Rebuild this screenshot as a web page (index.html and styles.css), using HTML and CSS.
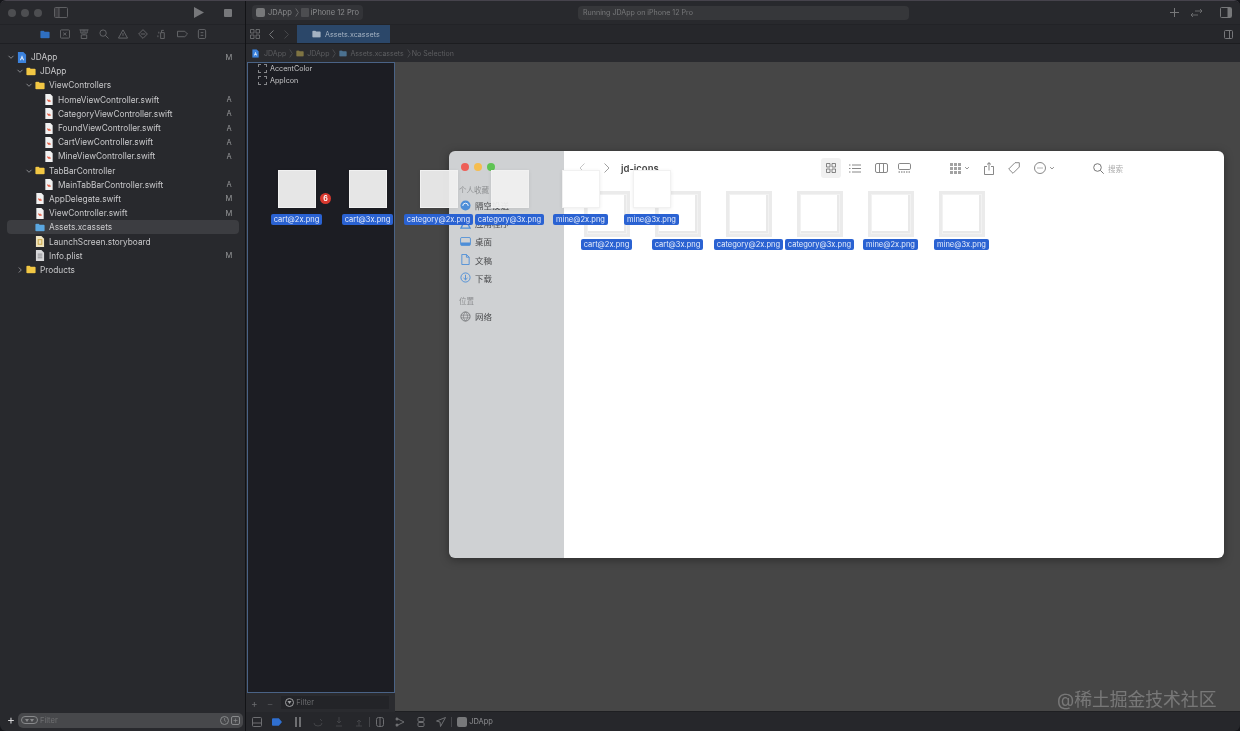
FILE: index.html
```html
<!DOCTYPE html>
<html lang="en">
<head>
    <meta charset="UTF-8">
    <meta name="viewport" content="width=device-width, initial-scale=1.0">
    <title>JDApp - Assets.xcassets</title>
    <link rel="stylesheet" href="styles.css">
</head>
<body>

    <!-- Shared icons -->
    <svg class="icon-defs" width="0" height="0">
        <symbol id="i-swift" viewBox="0 0 10 12">
            <path d="M1 0h5.500L9 2.500V12H1z" fill="#f1f1f1"/>
            <path d="M3.200 5.500c1 .8 1.900 1.500 2.500 1.800-.5-.7-.8-1.300-1-1.800.8.800 1.500 1.300 2 1.500.2.700 0 1.700 0 1.700-.6-.4-1.100-.2-1.700-.2-.9 0-1.500-.8-1.800-1.400z" fill="#e4573d"/>
        </symbol>
        <symbol id="i-folder" viewBox="0 0 12 10">
            <path d="M.5 1.500C.5.900.9.500 1.500.500h3l1 1.200h5c.6 0 1 .4 1 1v5.800c0 .6-.4 1-1 1h-9c-.6 0-1-.4-1-1z" fill="currentColor"/>
        </symbol>
        <symbol id="i-project" viewBox="0 0 10 12">
            <path d="M.5 0h6L9.500 3v9H.5z" fill="#3c82dc"/>
            <path d="M5 3.500 2.700 9h1l.4-1h1.800l.4 1h1zM4.500 7 5 5.600 5.500 7z" fill="#e6f0fb"/>
        </symbol>
        <symbol id="i-story" viewBox="0 0 10 12">
            <path d="M.5 0h6L9.500 3v9H.5z" fill="#efe4c0"/>
            <rect x="3" y="4" width="4" height="5" fill="none" stroke="#c9a23f"/>
        </symbol>
        <symbol id="i-plist" viewBox="0 0 10 12">
            <path d="M.5 0h6L9.500 3v9H.5z" fill="#d8d8da"/>
            <path d="M2.500 4.500h5M2.500 6.500h5M2.500 8.500h5" stroke="#77777b" stroke-width=".8"/>
        </symbol>
        <symbol id="i-chevron" viewBox="0 0 8 8">
            <path d="M1.500 2.800 4 5.300l2.500-2.500" fill="none" stroke="currentColor" stroke-width="1"/>
        </symbol>
        <symbol id="i-crumb" viewBox="0 0 4 10">
            <path d="M.5.500 3.500 5 .5 9.500" fill="none" stroke="currentColor" stroke-width=".7"/>
        </symbol>
    </svg>

    <div class="xcode">

        <!-- Navigator -->
        <aside class="navigator">
            <div class="nav-toolbar">
                <div class="lights">
                    <span class="light"></span>
                    <span class="light"></span>
                    <span class="light"></span>
                </div>
                <svg class="sidebar-toggle" viewBox="0 0 14 11" width="14" height="11"><path d="M.5 1.500a1 1 0 0 1 1-1h11a1 1 0 0 1 1 1v8a1 1 0 0 1-1 1h-11a1 1 0 0 1-1-1zM5 .5v10" fill="none" stroke="currentColor"/><path d="M1 1h4v9H1z" fill="currentColor" opacity=".35"/></svg>
                <svg class="run-btn" viewBox="0 0 10 11" width="10" height="11"><path d="M0 0l10 5.500L0 11z" fill="currentColor"/></svg>
                <span class="stop-btn"></span>
            </div>

            <div class="nav-tabs">
                <svg viewBox="0 0 12 10" width="10" height="9" class="is-active"><use href="#i-folder"/></svg>
                <svg viewBox="0 0 11 11" width="10" height="10"><rect x=".5" y="1" width="10" height="9" rx="1" fill="none" stroke="currentColor"/><path d="M3.500 4l3.500 3M7 4 3.500 7" stroke="currentColor"/></svg>
                <svg viewBox="0 0 11 11" width="10" height="10"><path d="M.5 1h10M2 1v3.500h2.500V1M6.500 1v3.500H9V1M5.500 4.500v2M2.500 6.500h6v4h-6z" fill="none" stroke="currentColor"/></svg>
                <svg viewBox="0 0 11 11" width="10" height="10"><circle cx="4.500" cy="4.500" r="3.500" fill="none" stroke="currentColor"/><path d="M7 7l3.500 3.500" stroke="currentColor"/></svg>
                <svg viewBox="0 0 11 11" width="10" height="10"><path d="M5.500 1 10.500 10H.5zM5.500 4.500v3" fill="none" stroke="currentColor"/></svg>
                <svg viewBox="0 0 11 11" width="10" height="10"><path d="M5.500.7 10.300 5.500 5.500 10.300.7 5.500zM3 5.500h5" fill="none" stroke="currentColor"/></svg>
                <svg viewBox="0 0 11 11" width="10" height="10"><path d="M4 4h4v6.500H4zM5 4V1.500h2.500M2 3v2M1 7v2" fill="none" stroke="currentColor"/></svg>
                <svg viewBox="0 0 12 11" width="11" height="10"><path d="M.5 2.500h8l3 3-3 3h-8z" fill="none" stroke="currentColor"/></svg>
                <svg viewBox="0 0 11 11" width="10" height="10"><rect x="1.500" y=".5" width="8" height="10" rx="1.500" fill="none" stroke="currentColor"/><path d="M4 4h3M4 7h3" stroke="currentColor"/></svg>
            </div>

            <div class="tree">
                <div class="tree-row lvl-0 strong"><svg class="chev" width="8" height="8"><use href="#i-chevron"/></svg><svg class="file-icon" viewBox="0 0 10 12"><use href="#i-project"/></svg><span>JDApp</span><em>M</em></div>
                <div class="tree-row lvl-1"><svg class="chev" width="8" height="8"><use href="#i-chevron"/></svg><svg class="file-icon yellow" viewBox="0 0 12 10"><use href="#i-folder"/></svg><span>JDApp</span></div>
                <div class="tree-row lvl-2"><svg class="chev" width="8" height="8"><use href="#i-chevron"/></svg><svg class="file-icon yellow" viewBox="0 0 12 10"><use href="#i-folder"/></svg><span>ViewControllers</span></div>
                <div class="tree-row lvl-3"><i class="chev"></i><svg class="file-icon" viewBox="0 0 10 12"><use href="#i-swift"/></svg><span>HomeViewController.swift</span><em>A</em></div>
                <div class="tree-row lvl-3"><i class="chev"></i><svg class="file-icon" viewBox="0 0 10 12"><use href="#i-swift"/></svg><span>CategoryViewController.swift</span><em>A</em></div>
                <div class="tree-row lvl-3"><i class="chev"></i><svg class="file-icon" viewBox="0 0 10 12"><use href="#i-swift"/></svg><span>FoundViewController.swift</span><em>A</em></div>
                <div class="tree-row lvl-3"><i class="chev"></i><svg class="file-icon" viewBox="0 0 10 12"><use href="#i-swift"/></svg><span>CartViewController.swift</span><em>A</em></div>
                <div class="tree-row lvl-3"><i class="chev"></i><svg class="file-icon" viewBox="0 0 10 12"><use href="#i-swift"/></svg><span>MineViewController.swift</span><em>A</em></div>
                <div class="tree-row lvl-2"><svg class="chev" width="8" height="8"><use href="#i-chevron"/></svg><svg class="file-icon yellow" viewBox="0 0 12 10"><use href="#i-folder"/></svg><span>TabBarController</span></div>
                <div class="tree-row lvl-3"><i class="chev"></i><svg class="file-icon" viewBox="0 0 10 12"><use href="#i-swift"/></svg><span>MainTabBarController.swift</span><em>A</em></div>
                <div class="tree-row lvl-2"><i class="chev"></i><svg class="file-icon" viewBox="0 0 10 12"><use href="#i-swift"/></svg><span>AppDelegate.swift</span><em>M</em></div>
                <div class="tree-row lvl-2"><i class="chev"></i><svg class="file-icon" viewBox="0 0 10 12"><use href="#i-swift"/></svg><span>ViewController.swift</span><em>M</em></div>
                <div class="tree-row lvl-2 selected"><i class="chev"></i><svg class="file-icon blue" viewBox="0 0 12 10"><use href="#i-folder"/></svg><span>Assets.xcassets</span></div>
                <div class="tree-row lvl-2"><i class="chev"></i><svg class="file-icon" viewBox="0 0 10 12"><use href="#i-story"/></svg><span>LaunchScreen.storyboard</span></div>
                <div class="tree-row lvl-2"><i class="chev"></i><svg class="file-icon" viewBox="0 0 10 12"><use href="#i-plist"/></svg><span>Info.plist</span><em>M</em></div>
                <div class="tree-row lvl-1"><svg class="chev closed" width="8" height="8"><use href="#i-chevron"/></svg><svg class="file-icon yellow" viewBox="0 0 12 10"><use href="#i-folder"/></svg><span>Products</span></div>
            </div>

            <div class="nav-filter">
                <span class="plus">+</span>
                <div class="filter-field">
                    <span class="filter-pill"><svg viewBox="0 0 8 6" width="6" height="5"><path d="M0 0h8L4 6z" fill="currentColor"/></svg><svg viewBox="0 0 8 6" width="5" height="4"><path d="M0 0h8L4 6z" fill="currentColor"/></svg></span>
                    <span class="filter-text">Filter</span>
                    <svg class="filter-end" viewBox="0 0 9 9" width="9" height="9"><circle cx="4.500" cy="4.500" r="4" fill="none" stroke="currentColor"/><path d="M4.500 2v2.500L6 5.500" fill="none" stroke="currentColor" stroke-width=".7"/></svg>
                    <svg viewBox="0 0 9 9" width="9" height="9"><rect x=".5" y=".5" width="8" height="8" rx="1.500" fill="none" stroke="currentColor"/><path d="M2.500 4.500h4M4.500 2.500v4" stroke="currentColor" stroke-width=".7"/></svg>
                </div>
            </div>
        </aside>

        <!-- Editor side -->
        <main class="editor">
            <div class="toolbar">
                <div class="scheme">
                    <span class="app-icon"></span>
                    <span>JDApp</span>
                    <svg viewBox="0 0 4 10" width="4" height="9"><use href="#i-crumb"/></svg>
                    <span class="device-icon"></span>
                    <span>iPhone 12 Pro</span>
                </div>
                <div class="status">Running JDApp on iPhone 12 Pro</div>
                <div class="toolbar-right">
                    <svg viewBox="0 0 9 9" width="9" height="9"><path d="M4.500 0v9M0 4.500h9" stroke="currentColor"/></svg>
                    <svg class="swap-btn" viewBox="0 0 13 10" width="13" height="10"><path d="M5 3h7M10 1l2 2-2 2M8 7H1M3 5 1 7l2 2" fill="none" stroke="currentColor" stroke-width=".8"/></svg>
                    <svg viewBox="0 0 12 11" width="12" height="11"><rect x=".5" y=".5" width="11" height="10" rx="1" fill="none" stroke="currentColor"/><path d="M7.500 1h3.500v9H7.500z" fill="currentColor"/></svg>
                </div>
            </div>

            <div class="tabbar">
                <svg class="tab-grid" viewBox="0 0 10 10" width="10" height="10"><path d="M.5.500h3.500V4H.5zM6 .5h3.500V4H6zM.5 6h3.500v3.500H.5zM6 6h3.500v3.500H6z" fill="none" stroke="currentColor" stroke-width=".8"/></svg>
                <svg class="tab-back" viewBox="0 0 5 9" width="5" height="9"><path d="M4.500.500.500 4.500l4 4" fill="none" stroke="currentColor"/></svg>
                <svg class="tab-fwd" viewBox="0 0 5 9" width="5" height="9"><path d="M.5.500l4 4-4 4" fill="none" stroke="currentColor"/></svg>
                <div class="tab">
                    <svg viewBox="0 0 12 10" width="9" height="8"><use href="#i-folder"/></svg>
                    <span>Assets.xcassets</span>
                </div>
                <svg class="tab-add" viewBox="0 0 9 9" width="9" height="9"><rect x=".5" y=".5" width="8" height="8" rx="1" fill="none" stroke="currentColor"/><path d="M5.500 1v7" stroke="currentColor"/></svg>
            </div>

            <div class="jumpbar">
                <svg viewBox="0 0 10 12" width="7" height="9"><use href="#i-project"/></svg>
                <span class="crumb-first">JDApp</span>
                <svg viewBox="0 0 4 10" width="4" height="9"><use href="#i-crumb"/></svg>
                <svg class="crumb-yellow" viewBox="0 0 12 10" width="8" height="7"><use href="#i-folder"/></svg>
                <span>JDApp</span>
                <svg viewBox="0 0 4 10" width="4" height="9"><use href="#i-crumb"/></svg>
                <svg class="crumb-blue" viewBox="0 0 12 10" width="8" height="7"><use href="#i-folder"/></svg>
                <span>Assets.xcassets</span>
                <svg viewBox="0 0 4 10" width="4" height="9"><use href="#i-crumb"/></svg>
                <span class="crumb-last">No Selection</span>
            </div>

            <div class="workspace">
                <div class="asset-pane">
                    <div class="asset-list">
                        <div class="asset-row"><i></i>AccentColor</div>
                        <div class="asset-row"><i></i>AppIcon</div>
                    </div>
                    <div class="asset-filter">
                        <span class="asset-add">+</span>
                        <span class="asset-remove">−</span>
                        <div class="asset-field">
                            <svg viewBox="0 0 9 9" width="9" height="9"><circle cx="4.500" cy="4.500" r="4" fill="none" stroke="currentColor"/><path d="M2.500 3h4L4.500 6z" fill="currentColor"/></svg>
                            Filter
                        </div>
                    </div>
                </div>
                <div class="canvas"></div>
            </div>

            <div class="debugbar">
                <svg viewBox="0 0 10 10" width="10" height="10"><rect x=".5" y=".5" width="9" height="9" rx="1" fill="none" stroke="currentColor"/><path d="M.5 6h9" stroke="currentColor"/></svg>
                <svg class="is-active" viewBox="0 0 11 8" width="10" height="8"><path d="M0 1a1 1 0 0 1 1-1h6.500L11 4 7.500 8H1a1 1 0 0 1-1-1z" fill="currentColor"/></svg>
                <svg viewBox="0 0 8 10" width="10" height="10"><path d="M1 0h2v10H1zM5 0h2v10H5z" fill="currentColor"/></svg>
                <svg class="dim" viewBox="0 0 10 10" width="10" height="10"><path d="M1 6a4 3 0 0 0 8 0M7 2 9 4" fill="none" stroke="currentColor"/></svg>
                <svg class="dim" viewBox="0 0 10 10" width="10" height="10"><path d="M5 0v6M2 9h6M3 4l2 2 2-2" fill="none" stroke="currentColor"/></svg>
                <svg class="dim" viewBox="0 0 10 10" width="10" height="10"><path d="M5 9V3M2 9h6M3 5l2-2 2 2" fill="none" stroke="currentColor"/></svg>
                <span class="sep"></span>
                <svg viewBox="0 0 10 10" width="10" height="10"><rect x="1.500" y=".5" width="7" height="9" rx="2" fill="none" stroke="currentColor"/><path d="M5 .5v9" stroke="currentColor"/></svg>
                <svg viewBox="0 0 10 10" width="10" height="10"><path d="M1 1l8 4M1 9l8-4" fill="none" stroke="currentColor"/><circle cx="2" cy="2" r="1.500" fill="currentColor"/><circle cx="2" cy="8" r="1.500" fill="currentColor"/></svg>
                <svg viewBox="0 0 10 10" width="10" height="10"><rect x="2" y=".5" width="6" height="4" rx="1" fill="none" stroke="currentColor"/><rect x="2" y="5.500" width="6" height="4" rx="1" fill="none" stroke="currentColor"/></svg>
                <svg viewBox="0 0 10 10" width="10" height="10"><path d="M9.500.5 4.500 9.500 4 5 .5 4z" fill="none" stroke="currentColor"/></svg>
                <span class="sep"></span>
                <span class="app-icon"></span>
                <span class="debug-target">JDApp</span>
            </div>
        </main>
    </div>

    <!-- Finder window -->
    <section class="finder">
        <div class="finder-side">
            <div class="finder-lights">
                <span class="dot red"></span>
                <span class="dot yellow"></span>
                <span class="dot green"></span>
            </div>
            <div class="side-title">个人收藏</div>
            <div class="side-item"><svg viewBox="0 0 12 12" width="11" height="11"><circle cx="6" cy="6" r="5.500" fill="currentColor"/><path d="M3 6.500a3 3 0 0 1 6 0" fill="none" stroke="#fff"/></svg>隔空投送</div>
            <div class="side-item"><svg viewBox="0 0 12 12" width="11" height="11"><path d="M6 1 1 11h10z" fill="none" stroke="currentColor" stroke-width="1.500"/></svg>应用程序</div>
            <div class="side-item"><svg viewBox="0 0 12 10" width="11" height="9"><rect x=".5" y=".5" width="11" height="9" rx="1.500" fill="none" stroke="currentColor"/><path d="M1 6h10v3H1z" fill="currentColor"/></svg>桌面</div>
            <div class="side-item"><svg viewBox="0 0 10 12" width="9" height="11"><path d="M1 .5h5L9 3.500v8H1zM6 .5v3h3" fill="none" stroke="currentColor"/></svg>文稿</div>
            <div class="side-item"><svg viewBox="0 0 12 12" width="11" height="11"><circle cx="6" cy="6" r="5" fill="none" stroke="currentColor"/><path d="M6 3v5.500M3.800 6.500 6 8.500l2.200-2" fill="none" stroke="currentColor"/></svg>下载</div>
            <div class="side-title second">位置</div>
            <div class="side-item gray"><svg viewBox="0 0 12 12" width="11" height="11"><circle cx="6" cy="6" r="5" fill="none" stroke="currentColor"/><path d="M1 4.500h10M1 7.500h10M6 1c-3 3-3 7 0 10M6 1c3 3 3 7 0 10" fill="none" stroke="currentColor" stroke-width=".7"/></svg>网络</div>
        </div>
        <div class="finder-main">
            <div class="finder-bar">
                <svg class="nav-back" viewBox="0 0 6 10" width="6" height="10"><path d="M5.500.500 1 5l4.500 4.500" fill="none" stroke="currentColor"/></svg>
                <svg class="nav-fwd" viewBox="0 0 6 10" width="6" height="10"><path d="M.5.500 5 5 .5 9.500" fill="none" stroke="currentColor"/></svg>
                <span class="finder-title">jd-icons</span>
                <span class="view-btn active"><svg viewBox="0 0 10 10" width="10" height="10"><path d="M.5.500h3.500V4H.5zM6 .5h3.500V4H6zM.5 6h3.500v3.500H.5zM6 6h3.500v3.500H6z" fill="none" stroke="currentColor" stroke-width=".8"/></svg></span>
                <span class="view-btn list"><svg viewBox="0 0 12 9" width="12" height="9"><path d="M3 1h9M3 4.500h9M3 8h9M0 1h1.500M0 4.500h1.500M0 8h1.500" stroke="currentColor" stroke-width=".8"/></svg></span>
                <span class="view-btn cols"><svg viewBox="0 0 13 10" width="13" height="10"><rect x=".5" y=".5" width="12" height="9" rx="1.500" fill="none" stroke="currentColor" stroke-width=".8"/><path d="M4.500 1v8M8.500 1v8" stroke="currentColor" stroke-width=".8"/></svg></span>
                <span class="view-btn gallery"><svg viewBox="0 0 13 10" width="13" height="10"><rect x=".5" y=".5" width="12" height="6" rx="1.200" fill="none" stroke="currentColor" stroke-width=".8"/><path d="M.5 9h12" stroke="currentColor" stroke-dasharray="1.500 1"/></svg></span>
                <span class="group-btn"><svg viewBox="0 0 11 11" width="11" height="11"><path d="M0 0h3v3H0zM4 0h3v3H4zM8 0h3v3H8zM0 4h3v3H0zM4 4h3v3H4zM8 4h3v3H8zM0 8h3v3H0zM4 8h3v3H4zM8 8h3v3H8z" fill="#a2a2a2"/></svg><svg viewBox="0 0 8 8" width="6" height="6"><use href="#i-chevron"/></svg></span>
                <svg class="share-btn" viewBox="0 0 10 13" width="10" height="13"><path d="M3 4.500H.5v8h9v-8H7M5 8.500V.7M3 2.500 5 .7l2 1.800" fill="none" stroke="currentColor" stroke-width=".8"/></svg>
                <svg class="tag-btn" viewBox="0 0 12 12" width="12" height="12"><path d="M7 .7h4.300V5L5 11.300.7 7z" fill="none" stroke="currentColor" stroke-width=".8"/></svg>
                <span class="more-btn"><svg viewBox="0 0 12 12" width="12" height="12"><circle cx="6" cy="6" r="5.500" fill="none" stroke="currentColor" stroke-width=".8"/><path d="M3.500 6h1M5.500 6h1M7.500 6h1" stroke="currentColor"/></svg><svg viewBox="0 0 8 8" width="6" height="6"><use href="#i-chevron"/></svg></span>
                <span class="search-btn"><svg viewBox="0 0 11 11" width="11" height="11"><circle cx="4.500" cy="4.500" r="3.800" fill="none" stroke="currentColor"/><path d="M7.300 7.300 10.700 10.700" stroke="currentColor"/></svg><span>搜索</span></span>
            </div>
            <div class="finder-grid">
                <div class="finder-file"><span class="thumb"></span><label>cart@2x.png</label></div>
                <div class="finder-file"><span class="thumb"></span><label>cart@3x.png</label></div>
                <div class="finder-file"><span class="thumb"></span><label>category@2x.png</label></div>
                <div class="finder-file"><span class="thumb"></span><label>category@3x.png</label></div>
                <div class="finder-file"><span class="thumb"></span><label>mine@2x.png</label></div>
                <div class="finder-file"><span class="thumb"></span><label>mine@3x.png</label></div>
            </div>
        </div>
    </section>

    <!-- Files being dragged, over both windows -->
    <div class="drag-group">
        <div class="drag-file"><span class="drag-thumb grey"></span><label>cart@2x.png</label><span class="count">6</span></div>
        <div class="drag-file"><span class="drag-thumb grey"></span><label>cart@3x.png</label></div>
        <div class="drag-file"><span class="drag-thumb soft"></span><label>category@2x.png</label></div>
        <div class="drag-file"><span class="drag-thumb soft"></span><label>category@3x.png</label></div>
        <div class="drag-file"><span class="drag-thumb"></span><label>mine@2x.png</label></div>
        <div class="drag-file"><span class="drag-thumb"></span><label>mine@3x.png</label></div>
    </div>

    <div class="watermark">@稀土掘金技术社区</div>

</body>
</html>
```

FILE: styles.css
```css
* {
    margin: 0;
    padding: 0;
    box-sizing: border-box;
    font-family: Inter, "Noto Sans CJK SC", sans-serif;
}

html, body {
    width: 1240px;
    height: 731px;
    overflow: hidden;
    background: #15161a;
}

/* the reference is a soft, resized capture */
body {
    filter: blur(0.35px);
}

.icon-defs {
    position: absolute;
}

.xcode {
    display: flex;
    height: 731px;
    border-top: 1px solid #46434c;
    border-radius: 6px;
    overflow: hidden;
}

/* Navigator */
.navigator {
    width: 246px;
    flex-shrink: 0;
    display: flex;
    flex-direction: column;
    background: #28292d;
    border-right: 1px solid #121316;
}

.nav-toolbar {
    height: 24px;
    display: flex;
    align-items: center;
    padding-left: 8px;
    color: #5e5f62;
    border-bottom: 1px solid #222327;
}

.lights {
    display: flex;
    gap: 5px;
}

.light {
    width: 8px;
    height: 8px;
    border-radius: 50%;
    background: #4d4e51;
}

.sidebar-toggle {
    margin-left: 12px;
}

.run-btn {
    margin-left: 126px;
    color: #77787b;
}

.stop-btn {
    width: 8px;
    height: 8px;
    margin-left: 20px;
    border-radius: 1px;
    background: #77787b;
}

.nav-tabs {
    height: 19px;
    display: flex;
    align-items: center;
    gap: 9.500px;
    padding-left: 40px;
    color: #68696c;
    border-bottom: 1px solid #1e1f23;
}

.nav-tabs .is-active {
    color: #2f6fc0;
}

/* File tree */
.tree {
    flex: 1;
    padding-top: 6px;
}

.tree-row {
    height: 14.200px;
    width: 232px;
    margin-left: 7px;
    display: flex;
    align-items: center;
    padding-right: 6px;
    font-size: 8.300px;
    color: #c9c9cb;
    border-radius: 4px;
}

.tree-row span {
    white-space: nowrap;
}

.tree-row em {
    margin-left: auto;
    width: 8px;
    text-align: center;
    font-style: normal;
    font-size: 7.500px;
    color: #98999b;
}

.lvl-1 { padding-left: 9px; }
.lvl-2 { padding-left: 18px; }
.lvl-3 { padding-left: 27px; }

.chev {
    width: 8px;
    height: 8px;
    margin-right: 2px;
    flex-shrink: 0;
    color: #8a8b8e;
}

.chev.closed {
    transform: rotate(-90deg);
}

.file-icon {
    width: 10px;
    height: 11px;
    margin-right: 4px;
    flex-shrink: 0;
}

.yellow { color: #f2c744; }
.blue { color: #5aa7e0; }

.selected {
    background: #3c3d41;
}

.nav-filter {
    height: 18px;
    margin-bottom: 2px;
    display: flex;
    align-items: center;
    padding: 0 2px 0 7px;
    gap: 3px;
}

.plus {
    font-size: 12px;
    line-height: 12px;
    color: #d6d6d8;
}

.filter-field {
    flex: 1;
    height: 15px;
    display: flex;
    align-items: center;
    gap: 2px;
    padding: 0 3px;
    background: #47484b;
    border-radius: 5px;
    color: #88898b;
    font-size: 7.500px;
}

.filter-pill {
    width: 17px;
    height: 8px;
    display: flex;
    align-items: center;
    justify-content: center;
    gap: 1px;
    border: 1px solid #88898b;
    border-radius: 4px;
    color: #88898b;
}

.filter-pill svg {
    width: 4px;
    height: 3px;
}

.filter-text {
    color: #6f7072;
}

.filter-end {
    margin-left: auto;
}

/* Editor */
.editor {
    flex: 1;
    display: flex;
    flex-direction: column;
    min-width: 0;
}

.toolbar {
    height: 24px;
    display: flex;
    align-items: center;
    padding: 0 8px 0 6px;
    background: #28292d;
    border-bottom: 1px solid #222327;
    color: #8a8b8d;
    font-size: 7.500px;
}

.scheme {
    width: 111px;
    height: 15px;
    display: flex;
    align-items: center;
    gap: 3px;
    padding-left: 4px;
    background: #333438;
    border-radius: 4px;
}

.app-icon {
    width: 9px;
    height: 9px;
    background: #77787a;
    border-radius: 2px;
}

.device-icon {
    width: 8px;
    height: 9px;
    margin-left: -1px;
    margin-right: -1px;
    background: #4c4d50;
    border-radius: 1px;
}

.status {
    width: 331px;
    height: 14px;
    margin-left: 215px;
    display: flex;
    align-items: center;
    padding-left: 5px;
    background: #36373a;
    border-radius: 4px;
    color: #77787a;
    font-size: 7.100px;
}

.toolbar-right {
    margin-left: auto;
    display: flex;
    align-items: center;
    gap: 11px;
    color: #77787a;
}

.swap-btn {
    margin-right: 6px;
}

.tabbar {
    height: 19px;
    display: flex;
    align-items: center;
    background: #26272b;
    border-bottom: 1px solid #1c1d20;
    color: #76777a;
}

.tab-grid {
    margin-left: 4px;
}

.tab-back {
    margin-left: 9px;
}

.tab-fwd {
    margin-left: 10px;
    opacity: .4;
}

.tab {
    width: 93px;
    height: 18px;
    margin-left: 8px;
    display: flex;
    align-items: center;
    gap: 4px;
    padding-left: 15px;
    background: #2b4769;
    color: #a4b2c2;
    font-size: 7.200px;
}

.tab-add {
    margin-left: auto;
    margin-right: 7px;
}

.jumpbar {
    height: 18px;
    display: flex;
    align-items: center;
    gap: 3px;
    padding-left: 6px;
    background: #2a2b2f;
    color: #5d5e61;
    font-size: 7px;
}

.crumb-first {
    margin-left: 2px;
}

.crumb-last {
    margin-left: -2px;
}

.crumb-yellow { color: #7f7443; }
.crumb-blue { color: #4b7190; }

.workspace {
    flex: 1;
    display: flex;
    min-height: 0;
}

.asset-pane {
    width: 149px;
    display: flex;
    flex-direction: column;
    background: #2a2b2f;
}

.asset-list {
    flex: 1;
    margin-left: 1px;
    background: #1c1d23;
    border: 1px solid #4a6386;
    overflow: hidden;
}

.asset-row {
    height: 12.300px;
    display: flex;
    align-items: center;
    gap: 3px;
    padding-left: 10px;
    font-size: 7.200px;
    color: #c4c4c6;
}

.asset-row:first-child {
    margin-top: -1px;
}

.asset-row i {
    width: 9px;
    height: 9px;
    border: 1px dashed #85868a;
}

.asset-filter {
    height: 19px;
    display: flex;
    align-items: center;
    padding-left: 5px;
    color: #6c6d70;
    font-size: 10px;
}

.asset-remove {
    margin-left: 9px;
    opacity: .6;
}

.asset-field {
    width: 108px;
    height: 13px;
    margin-left: 8px;
    display: flex;
    align-items: center;
    gap: 2px;
    padding-left: 4px;
    background: #232428;
    color: #6a6b6e;
    font-size: 7.500px;
}

.asset-field svg {
    color: #a2a3a5;
}

.canvas {
    flex: 1;
    background: #464646;
    border-bottom: 1px solid #1e1f22;
}

.debugbar {
    height: 19px;
    display: flex;
    align-items: center;
    gap: 10.400px;
    padding-left: 6px;
    background: #26272b;
    color: #6e6f72;
    font-size: 7.500px;
}

.debugbar svg {
    flex-shrink: 0;
}

.debugbar .is-active {
    color: #2f6fd0;
}

.debugbar .dim {
    opacity: .4;
}

.sep {
    width: 1px;
    height: 10px;
    margin: 0 -5.400px;
    background: #45464a;
}

.debugbar .app-icon {
    width: 10px;
    height: 10px;
    margin-right: -8.400px;
}

.debug-target {
    color: #909194;
}

/* Finder */
.finder {
    position: absolute;
    left: 449px;
    top: 151px;
    width: 775px;
    height: 407px;
    display: flex;
    border-radius: 6px;
    overflow: hidden;
    box-shadow: 0 2px 10px rgba(0, 0, 0, 0.35);
}

.finder-side {
    width: 115px;
    padding: 12px 0 0 10px;
    background: #cfd1d3;
}

.finder-lights {
    display: flex;
    gap: 5px;
    padding-left: 2px;
    margin-bottom: 14px;
}

.dot {
    width: 8px;
    height: 8px;
    border-radius: 50%;
}

.dot.red { background: #ee5f57; }
.dot.yellow { background: #f5bd4f; }
.dot.green { background: #5fc454; }

.side-title {
    height: 11px;
    font-size: 7.500px;
    line-height: 11px;
    color: #8c8e90;
}

.side-title.second {
    margin-top: 9px;
}

.side-item {
    height: 18.200px;
    display: flex;
    align-items: center;
    gap: 4px;
    padding-left: 1px;
    font-size: 8.500px;
    color: #4a4b4d;
}

.side-item svg {
    width: 11px;
    color: #4d8ed8;
}

.side-item.gray svg {
    color: #75777a;
}

.finder-main {
    flex: 1;
    background: #fff;
}

.finder-bar {
    height: 34px;
    display: flex;
    align-items: center;
    padding-left: 15px;
    color: #6a6a6a;
}

.nav-back {
    color: #c6c6c6;
}

.nav-fwd {
    margin-left: 19px;
    color: #a0a0a0;
}

.finder-title {
    margin-left: 11px;
    width: 200px;
    font-size: 9.500px;
    font-weight: 600;
    color: #444;
}

.view-btn {
    width: 20px;
    height: 20px;
    display: flex;
    align-items: center;
    justify-content: center;
}

.view-btn.active {
    background: #f1f1f1;
    border-radius: 3px;
}

.view-btn.list { margin-left: 4px; }
.view-btn.cols { margin-left: 6px; }
.view-btn.gallery { margin-left: 3px; }

.group-btn {
    display: flex;
    align-items: center;
    gap: 3px;
    margin-left: 36px;
}

.share-btn { margin-left: 14px; }
.tag-btn { margin-left: 14px; }

.more-btn {
    display: flex;
    align-items: center;
    gap: 3px;
    margin-left: 14px;
}

.search-btn {
    display: flex;
    align-items: center;
    gap: 4px;
    margin-left: 38px;
    color: #777;
}

.search-btn span {
    font-size: 7.500px;
    color: #aaa;
}

.finder-grid {
    display: grid;
    grid-template-columns: repeat(6, 71px);
    padding: 6px 0 0 7px;
}

.finder-file {
    display: flex;
    flex-direction: column;
    align-items: center;
    gap: 2px;
}

.thumb {
    width: 46px;
    height: 46px;
    background: #fff;
    border: 3px solid #ebebeb;
    box-shadow: inset 0 0 0 1px #f2f2f2, inset -1px -1px 0 2px #e9e9e9;
}

.finder-file label,
.drag-file label {
    height: 11px;
    padding: 0 3px;
    line-height: 11px;
    font-size: 7.500px;
    color: #e8eefb;
    background: #2a62d2;
    border-radius: 2px;
    white-space: nowrap;
}

/* Dragged files */
.drag-group {
    position: absolute;
    left: 261px;
    top: 170px;
    display: grid;
    grid-template-columns: repeat(6, 71px);
}

.drag-file {
    position: relative;
    display: flex;
    flex-direction: column;
    align-items: center;
    gap: 6px;
}

.drag-thumb {
    width: 38px;
    height: 38px;
    background: #fff;
    border: 1px solid #f1f1f1;
    box-shadow: 0 1px 4px rgba(0, 0, 0, 0.08);
}

.drag-thumb.grey {
    background: #e6e6e6;
}

.drag-thumb.soft {
    background: rgba(240, 240, 240, 0.93);
}

.count {
    position: absolute;
    left: 59px;
    top: 23px;
    width: 11px;
    height: 11px;
    border-radius: 50%;
    background: #d8392f;
    color: #fff;
    font-size: 7px;
    font-weight: 700;
    line-height: 11px;
    text-align: center;
}

.watermark {
    position: absolute;
    left: 1057px;
    top: 688px;
    font-size: 17.800px;
    line-height: 24px;
    color: rgba(255, 255, 255, 0.27);
    white-space: nowrap;
}
```
